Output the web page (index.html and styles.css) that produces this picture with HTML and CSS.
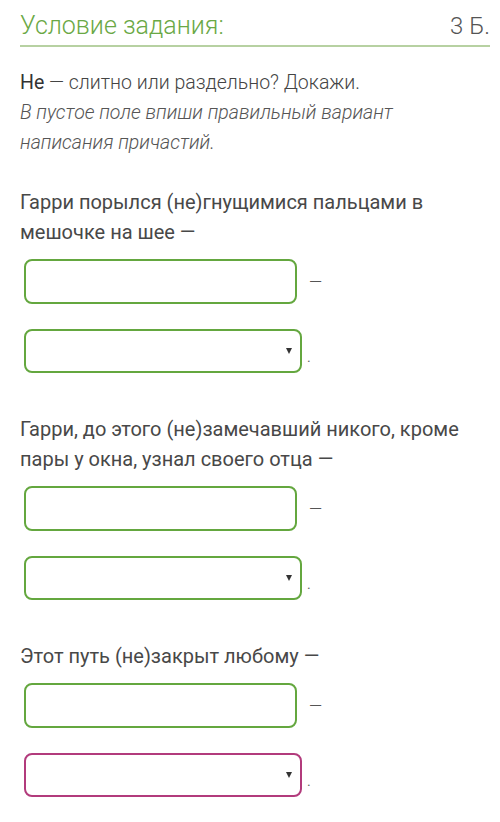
FILE: index.html
```html
<!DOCTYPE html>
<html lang="ru">
<head>
<meta charset="utf-8">
<link rel="stylesheet" href="styles.css">
</head>
<body>
<div class="page">
  <div class="header">
    <span class="title">Условие задания:</span>
    <span class="points">3 Б.</span>
  </div>
  <div class="intro">
    <div><b class="strong">Не</b> — слитно или раздельно? Докажи.</div>
    <div class="ital">В пустое поле впиши правильный вариант написания причастий.</div>
  </div>

  <div class="task">
    <div class="q">Гарри порылся (не)гнущимися пальцами в мешочке на шее —</div>
    <div class="row"><div class="field"></div><span class="dash">—</span></div>
    <div class="row"><div class="select"><span class="arrow"></span></div><span class="dot">.</span></div>
  </div>

  <div class="task">
    <div class="q">Гарри, до этого (не)замечавший никого, кроме пары у окна, узнал своего отца —</div>
    <div class="row"><div class="field"></div><span class="dash">—</span></div>
    <div class="row"><div class="select"><span class="arrow"></span></div><span class="dot">.</span></div>
  </div>

  <div class="task">
    <div class="q">Этот путь (не)закрыт любому —</div>
    <div class="row"><div class="field"></div><span class="dash">—</span></div>
    <div class="row"><div class="select wrong"><span class="arrow"></span></div><span class="dot">.</span></div>
  </div>
</div>
</body>
</html>
```

FILE: styles.css
```css
html, body {
  margin: 0;
  padding: 0;
  background: #ffffff;
}
.page {
  font-family: Roboto, "Liberation Sans", sans-serif;
  padding: 0 10px 0 20px;
  color: #454545;
}
.header {
  display: flex;
  justify-content: space-between;
  align-items: flex-end;
  height: 45px;
  border-bottom: 2px solid #b7d1a2;
}
.title {
  font-size: 25px;
  font-weight: 300;
  color: #6aa845;
  line-height: 38px;
}
.points {
  font-size: 24px;
  font-weight: 300;
  color: #555;
  line-height: 38px;
}
.intro {
  margin-top: 21px;
  font-size: 19.5px;
  line-height: 30px;
  font-weight: 300;
  color: #444;
}
.intro .strong {
  font-weight: 400;
  color: #333;
}
.intro .ital {
  font-style: italic;
  color: #555;
  padding-right: 80px;
}
.task {
  margin-top: 29px;
}
.task + .task {
  margin-top: 41px;
}
.q {
  font-size: 20px;
  line-height: 30px;
  color: #484848;
  padding-right: 20px;
}
.row {
  display: flex;
  align-items: center;
  padding-left: 4px;
}
.row:nth-child(2) {
  margin-top: 12px;
}
.row:nth-child(3) {
  margin-top: 25px;
}
.field {
  box-sizing: border-box;
  width: 273px;
  height: 45px;
  border: 2.5px solid #64a73f;
  border-radius: 8px;
  background: #fff;
}
.select {
  box-sizing: border-box;
  width: 278px;
  height: 44px;
  border: 2.5px solid #64a73f;
  border-radius: 8px;
  background: #fff;
  display: flex;
  justify-content: flex-end;
  align-items: center;
  padding-right: 8px;
}
.select.wrong {
  border-color: #b23b7c;
}
.arrow {
  width: 0;
  height: 0;
  border-left: 3.5px solid transparent;
  border-right: 3.5px solid transparent;
  border-top: 6px solid #333;
}
.dash {
  margin-left: 12px;
  font-size: 17px;
  font-weight: 300;
  color: #555;
}
.dot {
  margin-left: 5px;
  margin-top: 12px;
  font-size: 14px;
  color: #666;
}
```
